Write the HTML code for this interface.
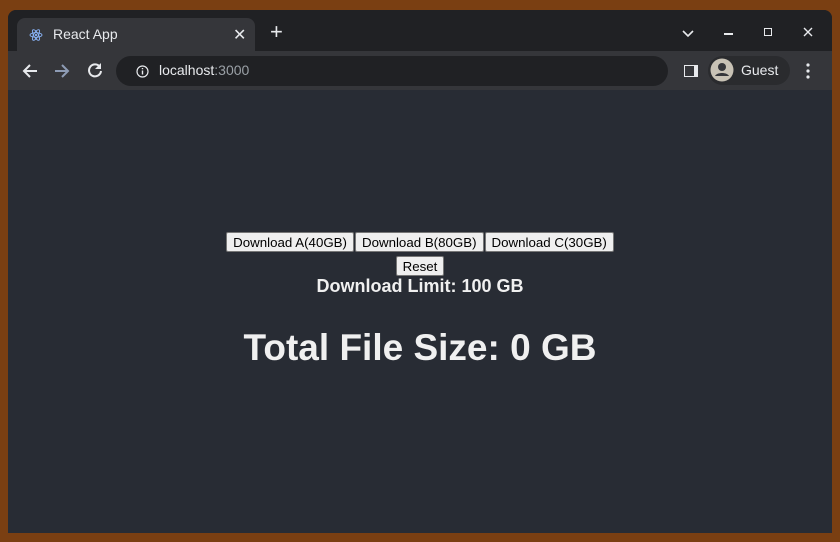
<!DOCTYPE html>
<html><head><style>
body{margin:0;width:840px;height:542px;background:#7a3f12;position:relative;overflow:hidden;font-family:"Liberation Sans",sans-serif}
.win{position:absolute;left:8px;top:10px;width:824px;height:523px;background:#282c34;border-radius:8px 8px 0 0;overflow:hidden}
.title{position:absolute;left:0;top:0;width:824px;height:41px;background:#202124}
.tab{position:absolute;left:9px;top:8px;width:238px;height:33px;background:#35363a;border-radius:8px 8px 0 0}
.tool{position:absolute;left:0;top:41px;width:824px;height:39px;background:#35363a}
.url{position:absolute;left:108px;top:5px;width:552px;height:30px;border-radius:15px;background:#202124}
.t{position:absolute;color:#e8eaed;font-size:14px}
.content{position:absolute;left:0;top:80px;width:824px;text-align:center;color:#f0f0f0}
button{font-family:"Liberation Sans",sans-serif;font-size:13.3px;background:#efefef;border:1px solid #767676;border-radius:2px;padding:1px 6px;color:#000;height:20px;margin:0 0.5px}
</style></head><body>
<div class="win">
<div class="title">
<div class="tab">
<svg style="position:absolute;left:12px;top:10px" width="14" height="14" viewBox="0 0 14 14"><g fill="none" stroke="#8ab4f8" stroke-width="0.9"><ellipse cx="7" cy="7" rx="6" ry="2.3"/><ellipse cx="7" cy="7" rx="6" ry="2.3" transform="rotate(60 7 7)"/><ellipse cx="7" cy="7" rx="6" ry="2.3" transform="rotate(120 7 7)"/></g><circle cx="7" cy="7" r="1.1" fill="#8ab4f8"/></svg>
<span class="t" style="left:36px;top:8px">React App</span>
<span class="t" style="left:216px;top:7px;font-size:16px">✕</span>
</div>
<span class="t" style="left:262px;top:11px;font-size:22px;line-height:22px">+</span>
<svg style="position:absolute;left:674px;top:20px" width="12" height="8"><path d="M1 1l5 5 5-5" stroke="#e8eaed" stroke-width="1.6" fill="none"/></svg>
<div style="position:absolute;left:716px;top:23px;width:9px;height:1.5px;background:#e8eaed"></div>
<div style="position:absolute;left:756px;top:18px;width:6px;height:6px;border:1.5px solid #e8eaed"></div>
<svg style="position:absolute;left:795px;top:17px" width="10" height="10"><path d="M1 1l8 8M9 1l-8 8" stroke="#e8eaed" stroke-width="1.4"/></svg>
</div>
<div class="tool">
<svg style="position:absolute;left:14px;top:12px" width="16" height="16"><path d="M15 8H2M8 2L2 8l6 6" stroke="#e8eaed" stroke-width="2" fill="none"/></svg>
<svg style="position:absolute;left:46px;top:12px" width="16" height="16"><path d="M1 8h13M8 2l6 6-6 6" stroke="#8e9cb5" stroke-width="2" fill="none"/></svg>
<svg style="position:absolute;left:79px;top:11px" width="16" height="16"><path d="M13 5A6 6 0 1 0 14 9" stroke="#e8eaed" stroke-width="2" fill="none"/><path d="M14 1v6H8z" fill="#e8eaed"/></svg>
<div class="url">
<svg style="position:absolute;left:20px;top:9px" width="13" height="13"><circle cx="6.5" cy="6.5" r="5.5" stroke="#e8eaed" stroke-width="1.2" fill="none"/><path d="M6.5 5.5v4M6.5 3v1.3" stroke="#e8eaed" stroke-width="1.4"/></svg>
<span class="t" style="left:43px;top:6px">localhost<span style="color:#9aa0a6">:3000</span></span>
</div>
<div style="position:absolute;left:676px;top:14px;width:9px;height:10px;border:1.5px solid #e8eaed;border-right:4px solid #e8eaed"></div>
<div style="position:absolute;left:700px;top:5px;width:82px;height:29px;border-radius:15px;background:#2a2b2e"></div>
<svg style="position:absolute;left:702px;top:7px" width="24" height="24"><circle cx="12" cy="12" r="11.5" fill="#c8c2b5"/><circle cx="12" cy="9" r="4" fill="#35363a"/><path d="M5 18c2-4 12-4 14 0" fill="#35363a"/></svg>
<span class="t" style="left:733px;top:11px">Guest</span>
<svg style="position:absolute;left:798px;top:12px" width="4" height="16"><circle cx="2" cy="2" r="1.6" fill="#e8eaed"/><circle cx="2" cy="8" r="1.6" fill="#e8eaed"/><circle cx="2" cy="14" r="1.6" fill="#e8eaed"/></svg>
</div>
<div class="content">
<div style="margin-top:142px;height:21px"><button>Download A(40GB)</button><button>Download B(80GB)</button><button>Download C(30GB)</button></div>
<div style="margin-top:3px;height:20px"><button>Reset</button></div>
<div style="font-weight:bold;font-size:18px;line-height:22px;margin-top:-1px">Download Limit: 100 GB</div>
<div style="font-weight:bold;font-size:37px;line-height:42px;margin-top:30px">Total File Size: 0 GB</div>
</div>
</div>
</body></html>
